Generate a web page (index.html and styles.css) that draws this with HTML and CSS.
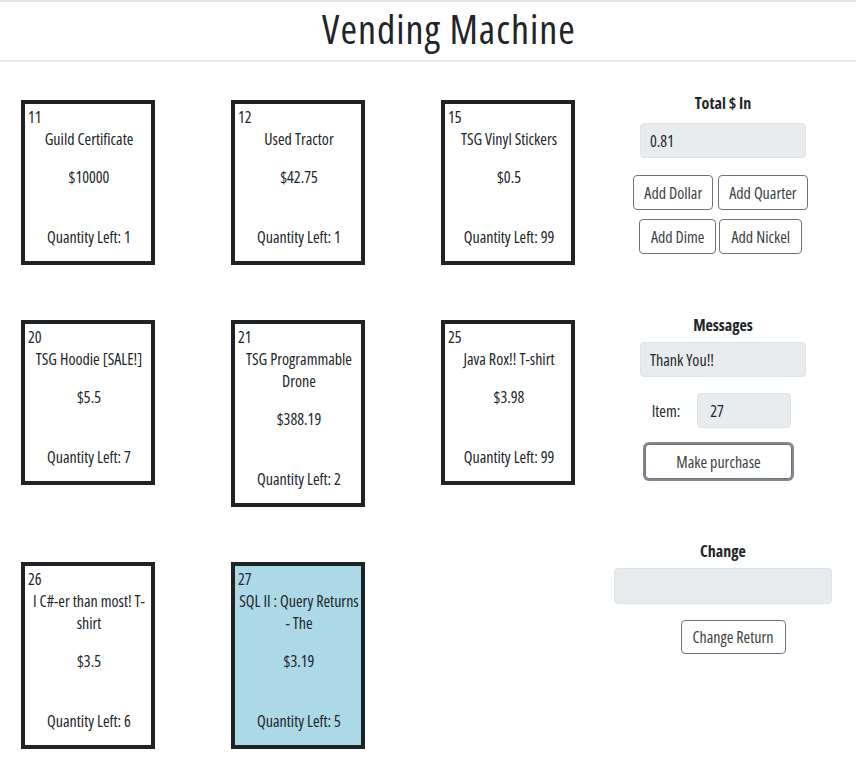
FILE: index.html
```html
<!DOCTYPE html>
<html>
<head>
<meta charset="utf-8">
<title>Vending Machine</title>
<link rel="stylesheet" href="styles.css">
</head>
<body>
<header class="page-header">
  <h1 class="title">Vending Machine</h1>
</header>
<main class="layout">
  <section class="items">
    <div class="card"><div class="card-id">11</div><p class="card-name">Guild Certificate</p><p class="card-price">$10000</p><p class="card-qty">Quantity Left: 1</p></div>
    <div class="card"><div class="card-id">12</div><p class="card-name">Used Tractor</p><p class="card-price">$42.75</p><p class="card-qty">Quantity Left: 1</p></div>
    <div class="card"><div class="card-id">15</div><p class="card-name">TSG Vinyl Stickers</p><p class="card-price">$0.5</p><p class="card-qty">Quantity Left: 99</p></div>
    <div class="card"><div class="card-id">20</div><p class="card-name">TSG Hoodie [SALE!]</p><p class="card-price">$5.5</p><p class="card-qty">Quantity Left: 7</p></div>
    <div class="card"><div class="card-id">21</div><p class="card-name">TSG Programmable Drone</p><p class="card-price">$388.19</p><p class="card-qty">Quantity Left: 2</p></div>
    <div class="card"><div class="card-id">25</div><p class="card-name">Java Rox!! T-shirt</p><p class="card-price">$3.98</p><p class="card-qty">Quantity Left: 99</p></div>
    <div class="card"><div class="card-id">26</div><p class="card-name">I C#-er than most! T-shirt</p><p class="card-price">$3.5</p><p class="card-qty">Quantity Left: 6</p></div>
    <div class="card selected"><div class="card-id">27</div><p class="card-name">SQL II : Query Returns - The</p><p class="card-price">$3.19</p><p class="card-qty">Quantity Left: 5</p></div>
  </section>
  <aside class="panel">
    <div class="group">
      <h2 class="label label-total">Total $ In</h2>
      <div class="field field-md">0.81</div>
      <div class="btn-row btn-row-first"><button class="btn">Add Dollar</button><button class="btn">Add Quarter</button></div>
      <div class="btn-row"><button class="btn">Add Dime</button><button class="btn">Add Nickel</button></div>
    </div>
    <div class="group group-messages">
      <h2 class="label">Messages</h2>
      <div class="field field-md">Thank You!!</div>
      <div class="item-row"><span class="item-label">Item:</span><div class="field field-sm">27</div></div>
      <button class="btn btn-focus">Make purchase</button>
    </div>
    <div class="group group-change">
      <h2 class="label">Change</h2>
      <div class="field field-lg"></div>
      <button class="btn btn-return">Change Return</button>
    </div>
  </aside>
</main>
</body>
</html>
```

FILE: styles.css
```css
* { box-sizing: border-box; }
html, body { margin: 0; padding: 0; background: #fff; }
body {
  font-family: "Open Sans", "Noto Sans", sans-serif;
  font-stretch: 75%;
  font-size: 16px;
  line-height: 22px;
  color: #212529;
  width: 856px;
  height: 760px;
  overflow: hidden;
}
.page-header {
  border-top: 2px solid #e3e4e6;
  border-bottom: 2px solid #e8e9ea;
  height: 62px;
  display: flex;
  justify-content: center;
  padding-left: 42px;
}
.title {
  margin: 0;
  font-weight: 400;
  font-size: 40px;
  letter-spacing: 1px;
  line-height: 52px;
  padding-top: 1px;
  color: #212529;
}
.layout {
  display: flex;
  align-items: flex-start;
}
.items {
  display: grid;
  grid-template-columns: repeat(3, 134px);
  column-gap: 76px;
  row-gap: 55px;
  align-items: start;
  padding-left: 21px;
  margin-top: 38px;
  width: 603px;
}
.card {
  border: 4px solid #202326;
  padding: 2px 1px 0 3px;
  text-align: center;
  background: #fff;
}
.card.selected { background: #add8e6; }
.card-id { text-align: left; }
.card p { margin: 0; }
.card .card-name { margin-bottom: 16px; }
.card .card-price { margin-bottom: 38px; }
.card .card-qty { margin-bottom: 13px; }

.panel {
  width: 240px;
  margin-top: 30px;
  display: flex;
  flex-direction: column;
  align-items: center;
}
.group {
  display: flex;
  flex-direction: column;
  align-items: center;
  width: 100%;
}
.label {
  margin: 0 0 6px;
  font-size: 16px;
  font-weight: 700;
  line-height: 22px;
}
.label-total { margin-bottom: 9px; }
.field {
  background: #e9ecef;
  border: 1px solid #dfe2e6;
  border-radius: 4px;
  height: 35px;
  padding: 6px 9px;
  line-height: 22px;
  text-align: left;
}
.field-md { width: 166px; }
.field-sm { width: 94px; padding-left: 12px; }
.field-lg { width: 218px; height: 36px; }
.btn-row { display: flex; gap: 3px; margin-top: 9px; margin-right: 5px; }
.btn-row-first { margin-top: 17px; gap: 5px; }
.btn {
  font: inherit;
  color: #3a3f44;
  background: #fff;
  border: 1px solid #6c757d;
  border-radius: 4px;
  height: 35px;
  padding: 0 11px;
  line-height: 22px;
}
.btn-row-first .btn { padding: 0 10px; }
.group-messages { margin-top: 60px; }
.item-row {
  display: flex;
  align-items: center;
  margin-top: 16px;
  gap: 17px;
  padding-right: 3px;
}
.btn-focus {
  margin-top: 16px;
  margin-right: 9px;
  width: 147px;
  height: 35px;
  box-shadow: 0 0 0 2px #84888d;
}
.group-change { margin-top: 61px; }
.btn-return { margin-top: 16px; margin-left: 20px; height: 34px; padding: 0 11px; }
```
